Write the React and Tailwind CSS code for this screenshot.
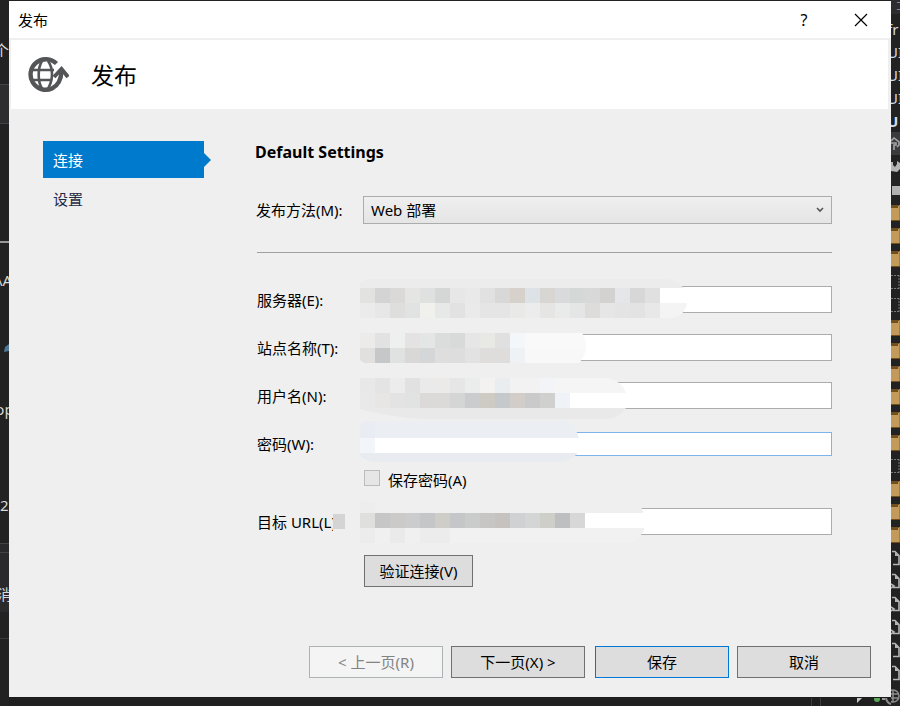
import React from "react";

const MOSAICS = {
  server: {
    width: 327,
    height: 39,
    shape: "M10 0H308Q318 3 324 9V24H327Q324 39 310 39H0V4Q4 0 10 0Z",
    rows: [
      { y: 0, h: 9, fill: "#ececec", cells: [] },
      {
        y: 9, h: 15, fill: "#ffffff",
        cells: ["#e2e2e1", "#d4d4d4", "#dad9d8", "#e5e5e3", "#dfe1e0", "#d5d7d6", "#e7e7e7", "#e9e9e9", "#e1e1e1", "#d8d8d8", "#d6d2cb", "#dde2e6", "#d8d6d3", "#d8dadc", "#d4d8d7", "#d8d8d8", "#d4d2d0", "#e4e6e9", "#d7d7d7", "#e0e0e0"],
      },
      {
        y: 24, h: 15, fill: "#f4f4f4",
        cells: ["#ebebeb", "#e7e7e7", "#dededc", "#e0e3e2", "#f0f0ed", "#e7e9e8", "#e2e2e2", "#eaeaea", "#e5e5e5", "#e5e5e5", "#e9e9e7", "#ececec", "#e5e5e3", "#e9ebeb", "#e4e6e5", "#dddcda", "#e6e6e6", "#e4e4e4", "#e3e3e3", "#e8e8e8"],
      },
    ],
  },
  site: {
    width: 226,
    height: 30,
    shape: "M0 0H222Q226 5 226 14Q226 22 219 30H4L0 27Z",
    rows: [
      {
        y: 0, h: 15, fill: "#f9f9f9",
        cells: ["#ecebe9", "#e2e2e2", "#eef0ef", "#e4e2e3", "#e4e6e6", "#dadddc", "#d7dad9", "#e6e6e6", "#e8e8e5", "#e0e0e0", "#f4f7fa"],
      },
      {
        y: 15, h: 15, fill: "#f8f8f8",
        cells: ["#e1e0df", "#c6c7c8", "#dfe2e0", "#dad8d7", "#d4d6d8", "#dedede", "#dddddd", "#e2e2e2", "#dedddb", "#dedddb", "#eff2f5"],
      },
    ],
  },
  user: {
    width: 266,
    height: 41,
    shape: "M0 0H248Q262 3 266 15V30Q258 41 246 41H60Q20 37 0 31Z",
    rows: [
      {
        y: 0, h: 15, fill: "#f5f5f5",
        cells: ["#e8e8e8", "#e4e4e4", "#ececec", "#e1e1e1", "#eaeaea", "#ebeae8", "#e6e6e6", "#ebedec", "#f3f2f0", "#eaedf0", "#f2f2f2", "#f2f2f2", "#f2f4f7"],
      },
      {
        y: 15, h: 15, fill: "#ffffff",
        cells: ["#e9e9e9", "#e8e6e4", "#e3e3e3", "#e0e3e1", "#dcdad8", "#dcdad8", "#d4d6d5", "#cacccd", "#cecbc5", "#c5c9cc", "#d3cdca", "#cacaca", "#d0d0ce", "#eff3f7"],
      },
      { y: 30, h: 11, fill: "#e9e9e9", cells: [] },
    ],
  },
  password: {
    width: 219,
    height: 41,
    shape: "M8 0H206Q215 4 219 17V31Q210 41 200 41H14Q4 40 0 34V6Q2 0 8 0Z",
    rows: [
      { y: 0, h: 17, fill: "#ebeff3", cells: ["#e9edf3"] },
      { y: 17, h: 15, fill: "#ffffff", cells: ["#f2f6fa"] },
      { y: 32, h: 9, fill: "#e8ecf0", cells: [] },
    ],
  },
  url: {
    width: 284,
    height: 42,
    shape: "M0 0H276Q282 4 284 15V30Q276 42 266 42H0Z",
    rows: [
      { y: 0, h: 12, fill: "#efefef", cells: ["#ededed"] },
      {
        y: 12, h: 15, fill: "#ffffff",
        cells: ["#dfdfde", "#c6c6c6", "#cbcac8", "#cbcccd", "#c5c6c8", "#cfcdc8", "#c5c6c8", "#cacbcb", "#c7c6c5", "#c5c2bf", "#cfd1d2", "#d4d6d5", "#cfcfca", "#bebfc1", "#d7d7d7"],
      },
      {
        y: 27, h: 15, fill: "#f1f1f1",
        cells: ["#ececec", "#f0f0f0", "#eaeaea", "#f0f0f0", "#ececec", "#ececec"],
      },
    ],
  },
};

function Mosaic({ name, className }) {
  const m = MOSAICS[name];
  return (
    <svg
      aria-hidden="true"
      width={m.width}
      height={m.height}
      shapeRendering="crispEdges"
      className={`pointer-events-none absolute -left-[3px] ${className}`}
    >
      <clipPath id={`mask-${name}`}>
        <path d={m.shape} />
      </clipPath>
      <g clipPath={`url(#mask-${name})`}>
        {m.rows.map((r) => (
          <g key={r.y}>
            <rect x="0" y={r.y} width={m.width} height={r.h} fill={r.fill} />
            {r.cells.map((c, i) => (
              <rect key={i} x={i * 15} y={r.y} width="15" height={r.h} fill={c} />
            ))}
          </g>
        ))}
      </g>
    </svg>
  );
}

function Field({ id, label, type = "text", mosaic, offset, inputClass = "h-[27px] border-[#acacac]" }) {
  return (
    <div className="flex h-[27px] items-center">
      <label htmlFor={id} className="w-[107px] shrink-0 pl-px whitespace-nowrap">{label}</label>
      <div className="relative flex h-[27px] flex-1 items-center">
        <input id={id} type={type} className={`w-full border bg-white px-1 outline-none ${inputClass}`} />
        <Mosaic name={mosaic} className={offset} />
      </div>
    </div>
  );
}

function PublishIcon() {
  return (
    <svg width="42" height="36" viewBox="0 0 42 36" fill="none" stroke="#535557" aria-hidden="true">
      <path d="M29.5 6.500A15.300 15.300 0 1 0 25 31.500Q34 27 34.500 14" strokeWidth="4.400" />
      <path d="M5 13H27M5 23H25" strokeWidth="2.600" />
      <path d="M15 4C10.500 11 10.500 26 15.500 32M21 4C24 8 25 12 25 17C25 24 23 29 20 33" strokeWidth="2.600" />
      <path d="M27 20L34.500 12L41 20" strokeWidth="4" />
    </svg>
  );
}

function TreeIcon({ kind }) {
  if (kind === "folder")
    return (
      <svg width="9" height="16" aria-hidden="true">
        <rect width="9" height="16" fill="#73501d" />
        <rect y="1" width="9" height="14" fill="#c39a59" />
        <rect y="1" width="7" height="2" fill="#70501f" />
        <rect x="8" width="1" height="15" fill="#b87a24" />
      </svg>
    );
  if (kind === "dotted")
    return (
      <svg width="9" height="16" fill="none" stroke="#77777a" strokeDasharray="2 1" aria-hidden="true">
        <path d="M0 1.500H9M0 14.500H9M8 1V15" />
      </svg>
    );
  if (kind === "square")
    return (
      <svg width="9" height="16" aria-hidden="true">
        <rect x="1" y="4" width="8" height="9" fill="#b0b0b0" />
      </svg>
    );
  if (kind === "wrench")
    return (
      <svg width="9" height="16" fill="none" stroke="#a4a4a4" strokeWidth="1.600" aria-hidden="true">
        <path d="M0 5L3 2L8 6V9L6 11M0 7H5V9H3V14" />
      </svg>
    );
  if (kind === "properties")
    return (
      <svg width="9" height="16" aria-hidden="true">
        <path d="M0 3H2V6L4 8L6 5V2L9 4V10L6 13L0 12Z" fill="#b4b4b4" />
      </svg>
    );
  if (kind === "globe")
    return (
      <svg width="9" height="16" fill="none" stroke="#8d8d8d" strokeWidth="1.500" aria-hidden="true">
        <circle cx="2" cy="8" r="6" />
        <path d="M0 6H8M0 10H8M2 2V14" />
      </svg>
    );
  return (
    <svg width="9" height="16" fill="none" stroke="#b5b5b5" strokeWidth="1.600" aria-hidden="true">
      <path d="M1 1.500H4L8 5.500V14.500H2" />
      <path d="M4 1V6H8Z" fill="#b5b5b5" stroke="none" />
      {kind === "script" && <path d="M0 11L3 13L0 15" />}
    </svg>
  );
}

const TREE = [
  "fr", "UI", "UI", "UI", "U",
  "wrench", "properties", "square",
  "folder", "folder", "folder", "dotted", "dotted",
  "folder", "folder", "folder", "folder", "folder", "folder", "dotted",
  "folder", "folder", "folder",
  "doc", "script", "script", "script", "doc", "doc", "globe",
];

function TreeStrip() {
  return (
    <div className="flex h-full w-[9px] flex-col overflow-hidden bg-[#222223] text-[#d0dce4]">
      <div className="h-[14px] shrink-0 bg-[#2d2d30] pl-1 text-[12px] leading-[14px] text-[#888]">コ</div>
      <div className="h-[3px] shrink-0" />
      {TREE.map((kind, i) => (
        <div
          key={i}
          className={`flex h-[23px] shrink-0 items-center ${kind === "wrench" ? "bg-[#3a3a3f]" : ""} ${kind === "U" ? "font-bold" : ""}`}
        >
          {kind.length <= 2 ? <span className="-ml-1">{kind}</span> : <TreeIcon kind={kind} />}
        </div>
      ))}
    </div>
  );
}

function EditorStrip() {
  return (
    <div className="flex h-full w-[9px] flex-col overflow-hidden whitespace-nowrap bg-[#222223] text-[#d8d8d8]">
      <div className="flex h-[84px] shrink-0 items-center justify-end pt-4">个</div>
      <div className="h-10 shrink-0 border-y border-[#434346] bg-[#2d2d30]" />
      <div className="h-[117px] shrink-0" />
      <div className="h-[2px] shrink-0 bg-[#999]" />
      <div className="flex h-[73px] shrink-0 items-center justify-center">\A</div>
      <div className="flex h-[64px] shrink-0 items-center justify-end">
        <svg width="5" height="8" aria-hidden="true"><path d="M0 8L1 3L5 0V7Z" fill="#4f7896" /></svg>
      </div>
      <div className="flex h-[58px] shrink-0 items-center justify-center">op</div>
      <div className="flex h-[105px] shrink-0 items-end pb-[28px]">2</div>
      <div className="h-[10px] shrink-0 border-y border-[#434346] bg-[#29292c]" />
      <div className="flex h-[59px] shrink-0 items-end justify-center bg-[#2a2a2d] pb-2">消</div>
      <div className="h-[27px] shrink-0 border-b border-[#39393b]" />
    </div>
  );
}

const navButton =
  "h-8 w-[134px] border border-[#707070] bg-[#dddddd] leading-5 text-black";

export default function App() {
  return (
    <div
      lang="zh-CN"
      className="relative flex min-h-screen bg-[#222223] font-['Noto_Sans','Noto_Sans_CJK_SC',sans-serif] text-[15px] leading-5 text-black"
    >
      <div className="absolute inset-y-0 left-0"><EditorStrip /></div>
      <div className="absolute inset-y-0 right-0"><TreeStrip /></div>

      <div className="mx-[9px] flex flex-1 flex-col pt-px">
        <main className="bg-[#efefef]">
          <div className="flex h-[37px] items-center bg-white pl-[9px]">
            <span className="flex-1">发布</span>
            <button type="button" aria-label="帮助" className="h-full w-[54px] text-[16px]">?</button>
            <button type="button" aria-label="关闭" className="flex h-full w-[60px] items-center justify-center">
              <svg width="14" height="14" fill="none" stroke="#000" strokeWidth="1.200" aria-hidden="true">
                <path d="M1 1L13 13M13 1L1 13" />
              </svg>
            </button>
          </div>

          <header className="mt-[2px] mr-[3px] ml-[2px] flex h-[69px] items-center gap-[22px] bg-white pl-4">
            <PublishIcon />
            <h1 className="text-[23px] leading-8">发布</h1>
          </header>

          <div className="flex pt-8 pr-[59px] pl-[34px]">
            <nav className="flex w-[161px] shrink-0 flex-col gap-[2px]">
              <a href="#connection" className="relative flex h-[37px] items-center bg-[#007acc] pl-[10px] text-white">
                连接
                <svg width="7" height="14" className="absolute top-3 left-full" aria-hidden="true">
                  <path d="M0 0L7 7L0 14Z" fill="#007acc" />
                </svg>
              </a>
              <a href="#settings" className="flex h-[37px] items-center pl-[10px] text-[#1e2b45]">设置</a>
            </nav>

            <form className="ml-[52px] min-w-0 flex-1">
              <h2 className="-ml-px text-[16px] leading-[22px] font-bold">Default Settings</h2>

              <div className="mt-[33px] flex h-7 items-center">
                <label htmlFor="method" className="w-[107px] shrink-0 whitespace-nowrap">发布方法(M):</label>
                <div className="relative flex-1">
                  <select
                    id="method"
                    className="block h-7 w-full appearance-none border border-[#acacac] bg-linear-to-b from-[#efefef] to-[#e5e5e5] px-[7px]"
                  >
                    <option>Web 部署</option>
                  </select>
                  <svg width="8" height="6" fill="none" stroke="#555" strokeWidth="1.600" className="pointer-events-none absolute top-[11px] right-2" aria-hidden="true">
                    <path d="M1 1L4 4L7 1" />
                  </svg>
                </div>
              </div>

              <hr className="mt-7 ml-px border-t border-[#a0a0a0]" />

              <div className="mt-[33px] flex flex-col gap-[21px]">
                <Field id="server" label="服务器(E):" mosaic="server" offset="-top-[7px]" />
                <Field id="site" label="站点名称(T):" mosaic="site" offset="-top-px" />
                <Field id="user" label="用户名(N):" mosaic="user" offset="-top-1" />
                <Field id="password" label="密码(W):" type="password" mosaic="password" offset="-top-[9px]" inputClass="h-6 border-[#7eb4ea]" />
              </div>

              <div className="mt-[13px] ml-[108px] flex h-[21px] items-start gap-2">
                <input id="save" type="checkbox" className="h-4 w-4 appearance-none border border-[#bcbcbc] bg-[#e6e6e6]" />
                <label htmlFor="save">保存密码(A)</label>
              </div>

              <div className="relative mt-[17px]">
                <Field id="url" label="目标 URL(L):" mosaic="url" offset="-top-[7px]" />
                <div className="absolute top-0 left-[77px] flex h-[27px] w-[27px] items-center bg-[#efefef]">
                  <div className="h-[15px] w-3 bg-[#d4d4d4]" />
                </div>
              </div>

              <button type="button" className="mt-5 ml-[108px] h-8 w-[109px] border border-[#707070] bg-[#dddddd]">
                验证连接(V)
              </button>
            </form>
          </div>

          <footer className="mt-[59px] flex justify-end gap-2 pr-5 pb-[19px]">
            <button type="button" disabled className="h-8 w-[134px] border border-[#adb2b5] bg-[#f4f4f4] leading-5 text-[#838383]">
              &lt; 上一页(R)
            </button>
            <button type="button" className={navButton}>下一页(X) &gt;</button>
            <button type="button" className="ml-[2px] h-8 w-[134px] border border-[#0078d7] bg-[#dddddd] leading-5">保存</button>
            <button type="button" className={navButton}>取消</button>
          </footer>
        </main>

        <div className="flex min-h-[9px] flex-1 items-start justify-end border-t border-[#1b1b1c] bg-[#1f1f20]">
          <div className="h-2 w-[10px] border-x border-[#3c3c3f]" />
          <svg width="70" height="8" aria-hidden="true">
            <path d="M36 0H41L36 5Z" fill="#c8c8c8" />
            <circle cx="56" cy="1" r="3" fill="#5aa85a" />
            <path d="M61 1H64" stroke="#999" strokeWidth="2" />
            <path d="M65 0Q66 5 70 6" fill="none" stroke="#8d8d8d" strokeWidth="2" />
          </svg>
        </div>
      </div>
    </div>
  );
}
